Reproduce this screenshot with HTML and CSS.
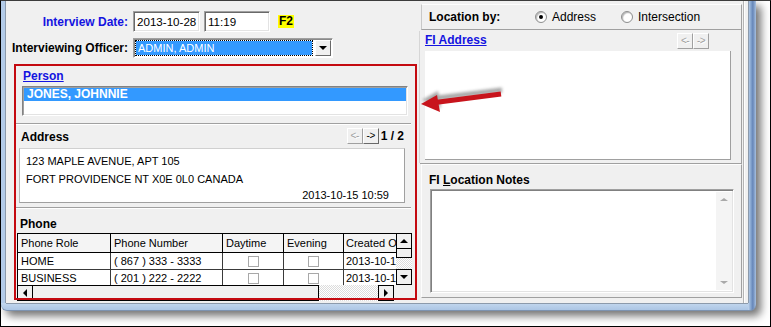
FILE: index.html
```html
<!DOCTYPE html>
<html>
<head>
<meta charset="utf-8">
<link rel="stylesheet" href="styles.css">
</head>
<body>
<div class="shot">
  <div class="window">
    <div class="client">
      <div class="left">
        <div class="frow frow-date">
          <span class="flabel blue">Interview Date:</span>
          <span class="tb tb-date">2013-10-28</span>
          <span class="tb tb-time">11:19</span>
          <span class="f2">F2</span>
        </div>
        <div class="frow frow-officer">
          <span class="flabel">Interviewing Officer:</span>
          <div class="combo">
            <div class="combo-val"><span class="combo-focus">ADMIN, ADMIN</span></div>
            <div class="combo-btn"><span class="tri tri-down"></span></div>
          </div>
        </div>
        <div class="person">
          <span class="link">Person</span>
          <div class="list"><div class="list-sel">JONES, JOHNNIE</div></div>
        </div>
        <div class="panel panel-addr">
          <div class="phead">
            <span class="ptitle">Address</span>
            <span class="nbtn dis">&lt;-</span><span class="nbtn">-&gt;</span>
            <span class="pager">1 / 2</span>
          </div>
          <div class="addrbox">
            <div class="aline">123 MAPLE AVENUE, APT 105</div>
            <div class="aline">FORT PROVIDENCE NT X0E 0L0 CANADA</div>
            <div class="adate">2013-10-15 10:59</div>
          </div>
        </div>
        <div class="panel panel-phone">
          <div class="ptitle phone-title">Phone</div>
          <div class="grid">
            <div class="gtable">
              <div class="grow ghead">
                <div class="gc">Phone Role</div>
                <div class="gc">Phone Number</div>
                <div class="gc">Daytime</div>
                <div class="gc">Evening</div>
                <div class="gc">Created O</div>
              </div>
              <div class="grow">
                <div class="gc">HOME</div>
                <div class="gc">( 867 ) 333 - 3333</div>
                <div class="gc cc"><span class="chk"></span></div>
                <div class="gc cc"><span class="chk"></span></div>
                <div class="gc">2013-10-1</div>
              </div>
              <div class="grow glast">
                <div class="gc">BUSINESS</div>
                <div class="gc">( 201 ) 222 - 2222</div>
                <div class="gc cc"><span class="chk"></span></div>
                <div class="gc cc"><span class="chk"></span></div>
                <div class="gc">2013-10-1</div>
              </div>
            </div>
            <div class="vscroll">
              <div class="sbtn"><span class="tri tri-up"></span></div>
              <div class="vthumb"></div>
              <div class="track"></div>
              <div class="sbtn"><span class="tri tri-down"></span></div>
            </div>
            <div class="hscroll">
              <div class="sbtn"><span class="tri tri-left"></span></div>
              <div class="hthumb"></div>
              <div class="track htrack"></div>
              <div class="sbtn"><span class="tri tri-right"></span></div>
              <div class="hcorner"></div>
            </div>
          </div>
        </div>
      </div>
      <div class="right">
        <div class="locbox">
          <span class="loclabel">Location by:</span>
          <span class="radio on"></span><span class="rlabel">Address</span>
          <span class="radio radio-2"></span><span class="rlabel">Intersection</span>
        </div>
        <div class="fipanel">
          <div class="fihead">
            <span class="link">FI Address</span>
            <span class="nbtn dis">&lt;-</span><span class="nbtn dis">-&gt;</span>
          </div>
          <div class="fibox"></div>
        </div>
        <div class="notespanel">
          <div class="ptitle notes-title">FI <u>L</u>ocation Notes</div>
          <div class="notesbox">
            <div class="nscroll"><span class="stri stri-up"></span><span class="stri stri-down"></span></div>
          </div>
        </div>
      </div>
      <div class="edge"></div>
    </div>
  </div>
  <div class="redbox"></div>
  <svg class="arrow" width="95" height="35" viewBox="0 0 95 35">
    <defs><filter id="blur" x="-20%" y="-50%" width="140%" height="200%"><feGaussianBlur stdDeviation="1.6"/></filter></defs>
    <g transform="translate(1,-4)" filter="url(#blur)" opacity="0.75">
      <line x1="22" y1="19" x2="86" y2="11" stroke="#8a8a8a" stroke-width="5"/>
      <polygon points="6,21 22,12 25,29" fill="#8a8a8a"/>
    </g>
    <line x1="20" y1="19.5" x2="86" y2="11" stroke="#c8141c" stroke-width="5"/>
    <polygon points="6,21 22,12 25,29" fill="#c8141c"/>
  </svg>
</div>
</body>
</html>
```

FILE: styles.css
```css
body {
  margin: 0;
  font-family: "Liberation Sans", Arial, sans-serif;
  font-size: 11px;
  color: #000;
  background: #fff;
}

.shot {
  width: 771px;
  height: 327px;
  box-sizing: border-box;
  border: 1px solid #000;
  border-top-color: #3c3c3c;
  background: #fff;
  position: relative;
  overflow: hidden;
}

.window {
  width: 755px;
  height: 310px;
  box-sizing: border-box;
  padding: 0 8px 8px 5px;
  border-radius: 0 0 6px 6px;
  background:
    linear-gradient(to right, #c4d7ee, #86a6d0 35%, #6686b8 60%, #a7c0df) right top / 8px 100% no-repeat,
    linear-gradient(to bottom, #c3d7ee, #a9c3e3) left bottom / 100% 8px no-repeat,
    #b3cbe8;
  box-shadow: 5px 5px 8px rgba(0, 0, 0, 0.55), inset 0 -1px 0 #7d93b0;
}

.client {
  display: flex;
  height: 302px;
  background: #f0f0f0;
  box-shadow: -1px 0 0 #8c9aab, 1px 0 0 #8c9aab, 0 1px 0 #8c9aab;
}

.left {
  width: 412px;
  flex: none;
}

.frow {
  display: flex;
  align-items: center;
}

.frow-date {
  margin-top: 10px;
  height: 21px;
}

.frow-officer {
  margin-top: 6px;
  height: 20px;
}

.flabel {
  width: 122px;
  text-align: right;
  font-weight: bold;
  font-size: 12px;
  margin-right: 5px;
  white-space: nowrap;
}

.blue {
  color: #1414e0;
}

.tb {
  box-sizing: border-box;
  height: 21px;
  background: #fff;
  border: 1px solid;
  border-color: #a0a0a0 #fff #fff #a0a0a0;
  box-shadow: inset 1px 1px 0 #696969, inset -1px -1px 0 #e3e3e3;
  padding: 0 0 0 3px;
  font-size: 11.6px;
  line-height: 19px;
  white-space: nowrap;
  overflow: hidden;
}

.tb-date {
  width: 67px;
}

.tb-time {
  width: 66px;
  margin-left: 4px;
}

.f2 {
  margin-left: 8px;
  background: #ffff00;
  font-weight: bold;
  font-size: 12px;
  line-height: 13px;
  padding: 0 1px;
}

.combo {
  width: 200px;
  height: 20px;
  box-sizing: border-box;
  display: flex;
  border: 1px solid;
  border-color: #a0a0a0 #fff #fff #a0a0a0;
  box-shadow: inset 1px 1px 0 #8a8a8a;
  background: #fff;
  padding: 1px 1px 1px 2px;
}

.combo-val {
  flex: 1;
  padding: 1px 1px 1px 0;
}

.combo-focus {
  display: block;
  height: 14px;
  box-sizing: border-box;
  background: #3399ff;
  color: #fff;
  outline: 1px dotted #000;
  outline-offset: 0;
  line-height: 14px;
  padding-left: 2px;
  white-space: nowrap;
}

.combo-btn {
  width: 16px;
  height: 16px;
  box-sizing: border-box;
  background: #f0f0f0;
  border: 1px solid;
  border-color: #fff #696969 #696969 #fff;
  display: flex;
  align-items: center;
  justify-content: center;
  margin-left: 2px;
}

.tri {
  width: 0;
  height: 0;
  display: block;
}

.tri-down {
  border-left: 4px solid transparent;
  border-right: 4px solid transparent;
  border-top: 4px solid #000;
}

.tri-up {
  border-left: 4px solid transparent;
  border-right: 4px solid transparent;
  border-bottom: 4px solid #000;
}

.tri-left {
  border-top: 4px solid transparent;
  border-bottom: 4px solid transparent;
  border-right: 4px solid #000;
}

.tri-right {
  border-top: 4px solid transparent;
  border-bottom: 4px solid transparent;
  border-left: 4px solid #000;
}

.person {
  margin-top: 12px;
  margin-left: 16px;
}

.link {
  display: block;
  color: #1414e0;
  font-weight: bold;
  font-size: 12px;
  line-height: 13px;
  text-decoration: underline;
  padding-left: 1px;
}

.list {
  margin-top: 3px;
  width: 386px;
  height: 30px;
  box-sizing: border-box;
  background: #fff;
  border: 1px solid;
  border-color: #828282 #fff #fff #828282;
  box-shadow: inset 1px 1px 0 #a0a0a0, inset -1px -1px 0 #e3e3e3;
  padding: 1px 1px 0 1px;
}

.list-sel {
  background: #3399ff;
  color: #fff;
  font-weight: bold;
  font-size: 12px;
  line-height: 13px;
  padding-left: 3px;
}

.panel {
  margin-left: 10px;
  width: 395px;
  box-sizing: border-box;
  border-top: 1px solid #a0a0a0;
  box-shadow: inset 0 1px 0 #fff;
}

.panel-addr {
  margin-top: 7px;
  height: 84px;
}

.phead {
  height: 24px;
  box-sizing: border-box;
  display: flex;
  align-items: center;
  padding: 0 7px 1px 5px;
}

.ptitle {
  font-weight: bold;
  font-size: 12px;
  line-height: 13px;
}

.phead .ptitle {
  margin-right: auto;
  padding-top: 4px;
}

.nbtn {
  width: 16px;
  height: 16px;
  box-sizing: border-box;
  background: #f0f0f0;
  border: 1px solid;
  border-color: #fff #696969 #696969 #fff;
  font-size: 10px;
  line-height: 13px;
  text-align: center;
  letter-spacing: -0.5px;
  white-space: nowrap;
}

.nbtn.dis {
  color: #a0a0a0;
  text-shadow: 1px 1px 0 #fff;
  border-color: #fff #a0a0a0 #a0a0a0 #fff;
}

.pager {
  font-weight: bold;
  font-size: 12px;
  margin-left: 2px;
  white-space: nowrap;
}

.addrbox {
  margin-left: 3px;
  width: 386px;
  height: 55px;
  box-sizing: border-box;
  background: #fff;
  border: 1px solid #a0a0a0;
  border-top-color: #d0d0d0;
  border-left-color: #b8b8b8;
  padding: 3px 15px 0 6px;
}

.aline {
  line-height: 18px;
}

.adate {
  text-align: right;
  line-height: 14px;
}

.panel-phone {
  height: 94px;
}

.phone-title {
  padding: 10px 0 0 4px;
}

.grid {
  margin-top: 2px;
  margin-left: 1px;
  display: grid;
  grid-template-columns: 379px 16px;
  grid-template-rows: 52px 16px;
}

.gtable {
  border-left: 1px solid #000;
  border-top: 1px solid #000;
  background: #fff;
}

.grow {
  display: grid;
  grid-template-columns: 93px 112px 61px 60px 52px;
  height: 17px;
  box-sizing: border-box;
  border-bottom: 1px solid #3a3a3a;
}

.ghead {
  height: 19px;
  background: #f4f4f4;
  border-bottom-color: #000;
}

.grow.glast {
  height: 16px;
  border-bottom: 0;
}

.gc {
  border-right: 1px solid #3a3a3a;
  padding-left: 3px;
  white-space: nowrap;
  overflow: hidden;
  line-height: 16px;
}

.ghead .gc {
  border-right-color: #000;
  line-height: 18px;
}

.grow .gc:last-child {
  border-right: 0;
  padding-left: 2px;
}

.cc {
  display: flex;
  align-items: center;
  justify-content: center;
  padding-left: 0;
}

.chk {
  width: 11px;
  height: 11px;
  box-sizing: border-box;
  border: 1px solid #a8a8a8;
  background: #fff;
}

.vscroll {
  display: flex;
  flex-direction: column;
  background: #f0f0f0;
}

.sbtn {
  width: 16px;
  height: 16px;
  box-sizing: border-box;
  border: 1px solid #000;
  background: #f0f0f0;
  display: flex;
  align-items: center;
  justify-content: center;
  flex: none;
}

.vthumb {
  height: 9px;
  box-sizing: border-box;
  border: 1px solid #000;
  border-top: 0;
  background: #f0f0f0;
}

.track {
  flex: 1;
  background: repeating-conic-gradient(#ffffff 0 25%, #dcdcdc 0 50%) 0 0 / 2px 2px;
}

.hscroll {
  grid-column: 1 / 3;
  display: flex;
  background: #f0f0f0;
}

.hthumb {
  width: 286px;
  height: 16px;
  box-sizing: border-box;
  border: 1px solid #000;
  border-left: 0;
  background: #f0f0f0;
}

.htrack {
  width: 59px;
  flex: none;
}

.hcorner {
  flex: 1;
  background: #f0f0f0;
}

.right {
  width: 325px;
  flex: none;
}

.locbox {
  margin: 3px 0 0 3px;
  width: 321px;
  height: 26px;
  box-sizing: border-box;
  border: 1px solid;
  border-color: #fdfdfd #a0a0a0 #a0a0a0 #c8c8c8;
  display: flex;
  align-items: center;
  padding-left: 7px;
}

.loclabel {
  width: 106px;
  font-weight: bold;
  font-size: 12px;
}

.radio {
  width: 12px;
  height: 12px;
  box-sizing: border-box;
  border-radius: 50%;
  border: 1px solid #8e8f8f;
  background: radial-gradient(circle at 60% 60%, #fff 0 45%, #e6e6e6 75%);
  box-shadow: inset 1px 1px 1px #b8b8b8;
  display: flex;
  align-items: center;
  justify-content: center;
}

.radio.on::after {
  content: "";
  width: 4px;
  height: 4px;
  border-radius: 50%;
  background: #000;
}

.radio-2 {
  margin-left: 25px;
}

.rlabel {
  margin-left: 5px;
  font-size: 12px;
}

.fipanel {
  margin-left: 2px;
  width: 322px;
  height: 134px;
  box-sizing: border-box;
  border-right: 1px solid #a0a0a0;
  border-bottom: 1px solid #a0a0a0;
  box-shadow: -2px 0 0 -1px #d6d6d6;
}

.fihead {
  height: 21px;
  box-sizing: border-box;
  padding: 3px 32px 0 5px;
  display: flex;
  align-items: flex-start;
}

.fihead .link {
  line-height: 15px;
  margin-right: auto;
  padding-left: 0;
}

.fibox {
  margin-left: 5px;
  width: 306px;
  height: 109px;
  box-sizing: border-box;
  background: #fff;
  border-right: 1px solid #a0a0a0;
  border-bottom: 1px solid #a0a0a0;
}

.notespanel {
  margin-left: 3px;
  width: 321px;
  height: 134px;
  box-sizing: border-box;
  border: 1px solid;
  border-color: #fdfdfd #a0a0a0 #a0a0a0 #fdfdfd;
}

.notes-title {
  padding: 9px 0 0 7px;
}

.notes-title u {
  text-decoration-thickness: 1px;
}

.notesbox {
  margin: 2px 0 0 8px;
  width: 304px;
  height: 104px;
  box-sizing: border-box;
  background: #fff;
  border: 1px solid;
  border-color: #a0a0a0 #fff #fff #a0a0a0;
  box-shadow: inset 1px 1px 0 #808080, inset -1px -1px 0 #e3e3e3;
  display: flex;
  justify-content: flex-end;
  padding: 2px 1px 2px 0;
}

.nscroll {
  width: 16px;
  background: #f4f4f4;
  display: flex;
  flex-direction: column;
  justify-content: space-between;
  align-items: center;
  padding: 6px 0 6px;
  box-sizing: border-box;
}

.stri {
  width: 0;
  height: 0;
  display: block;
}

.stri-up {
  border-left: 4px solid transparent;
  border-right: 4px solid transparent;
  border-bottom: 3px solid #a9a9a9;
}

.stri-down {
  border-left: 4px solid transparent;
  border-right: 4px solid transparent;
  border-top: 3px solid #a9a9a9;
}

.edge {
  flex: 1;
  box-shadow: inset 1px 0 0 #b4b4b4, inset 2px 0 0 #fdfdfd;
}

.redbox {
  position: absolute;
  left: 13px;
  top: 63px;
  width: 403px;
  height: 236px;
  box-sizing: border-box;
  border: 2px solid #c40a10;
}

.arrow {
  position: absolute;
  left: 414px;
  top: 82px;
}
```
